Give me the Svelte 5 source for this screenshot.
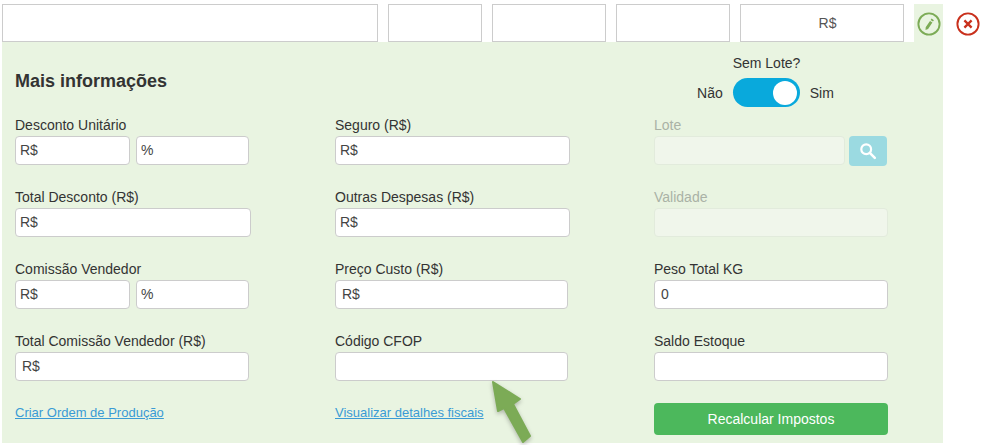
<script>
  const topCells = [
    { width: 376, text: '' },
    { width: 94, text: '' },
    { width: 114, text: '' },
    { width: 114, text: '' },
    { width: 164, text: 'R$' }
  ];
</script>

<div class="page">
  <div class="line">
    <div class="top-row">
      {#each topCells as cell}
        <div class="top-cell" style="width: {cell.width}px">{cell.text}</div>
      {/each}
      <div class="edit-cell">
        <button class="round-btn edit" aria-label="Editar">
          <svg width="24" height="24" viewBox="0 0 24 24">
            <circle cx="12" cy="12" r="10.6" fill="none" stroke="#7cab56" stroke-width="1.9" />
            <path d="M14.6 6.6l2.3 1.6-.9 1.4-2.4-1.6z M13 8.9l2.4 1.6-4.3 6.4-2.6 1 .2-2.7z" fill="#7cab56" />
          </svg>
        </button>
      </div>
    </div>
    <button class="round-btn remove" aria-label="Remover">
      <svg width="24" height="24" viewBox="0 0 24 24">
        <circle cx="12" cy="12" r="10.6" fill="none" stroke="#c9301c" stroke-width="1.9" />
        <path d="M8.4 8.4l7.2 7.2M15.6 8.4l-7.2 7.2" fill="none" stroke="#c9301c" stroke-width="2.3" />
      </svg>
    </button>
  </div>

  <section class="panel">
    <header class="head">
      <h3>Mais informações</h3>
      <div class="lote-toggle">
        <span class="toggle-title">Sem Lote?</span>
        <div class="toggle-row">
          <span class="no">Não</span>
          <span class="switch"><span class="knob"></span></span>
          <span class="yes">Sim</span>
        </div>
      </div>
    </header>

    <div class="fields">
      <div class="col">
        <div class="field">
          <label>Desconto Unitário</label>
          <div class="pair">
            <div class="input w115">R$</div>
            <div class="input w113">%</div>
          </div>
        </div>
        <div class="field">
          <label>Total Desconto (R$)</label>
          <div class="input w236">R$</div>
        </div>
        <div class="field">
          <label>Comissão Vendedor</label>
          <div class="pair">
            <div class="input w115">R$</div>
            <div class="input w113">%</div>
          </div>
        </div>
        <div class="field">
          <label>Total Comissão Vendedor (R$)</label>
          <div class="input w234 wide-pad">R$</div>
        </div>
        <a class="link" href="#ordem">Criar Ordem de Produção</a>
      </div>

      <div class="col">
        <div class="field">
          <label>Seguro (R$)</label>
          <div class="input w235">R$</div>
        </div>
        <div class="field">
          <label>Outras Despesas (R$)</label>
          <div class="input w235">R$</div>
        </div>
        <div class="field">
          <label>Preço Custo (R$)</label>
          <div class="input w233 mid-pad">R$</div>
        </div>
        <div class="field">
          <label>Código CFOP</label>
          <div class="input w233"></div>
        </div>
        <a class="link" href="#fiscais">Visualizar detalhes fiscais</a>
      </div>

      <div class="col">
        <div class="field">
          <label class="muted">Lote</label>
          <div class="pair tight">
            <div class="input disabled w191"></div>
            <button class="search" aria-label="Buscar">
              <svg width="18" height="18" viewBox="0 0 18 18">
                <circle cx="7.2" cy="7.2" r="4.9" fill="none" stroke="#fff" stroke-width="2.2" />
                <path d="M10.8 10.8l5 5" stroke="#fff" stroke-width="2.6" stroke-linecap="round" />
              </svg>
            </button>
          </div>
        </div>
        <div class="field">
          <label class="muted">Validade</label>
          <div class="input disabled w234"></div>
        </div>
        <div class="field">
          <label>Peso Total KG</label>
          <div class="input w234 mid-pad">0</div>
        </div>
        <div class="field">
          <label>Saldo Estoque</label>
          <div class="input w234"></div>
        </div>
        <button class="recalc">Recalcular Impostos</button>
      </div>
    </div>
  </section>

  <svg class="arrow" width="60" height="70" viewBox="0 0 60 70">
    <path d="M12 2L39 19 32 24 49 56 42 62 23 28 17 31z" fill="#7cab56" stroke="#7cab56" stroke-width="2" stroke-linejoin="round" />
  </svg>
</div>

<style>
  :global(body) {
    margin: 0;
    background: #fff;
  }

  .page {
    position: relative;
    width: 997px;
    height: 445px;
    overflow: hidden;
    font-family: "Liberation Sans", Arial, sans-serif;
    font-size: 14px;
    color: #333;
    padding-top: 4px;
    box-sizing: border-box;
  }

  .line {
    display: flex;
    margin-left: 2px;
  }

  .top-row {
    display: flex;
    gap: 10px;
    width: 941px;
  }

  .top-cell {
    height: 38px;
    box-sizing: border-box;
    border: 1px solid #ccc;
    background: #fff;
    text-align: center;
    line-height: 36px;
    font-size: 14px;
    color: #555;
    padding-left: 11px;
  }

  .edit-cell {
    width: 29px;
    background: #e9f4e1;
    display: flex;
    padding-top: 8px;
    padding-left: 3px;
    box-sizing: border-box;
  }

  .round-btn {
    border: 0;
    background: none;
    padding: 0;
    width: 24px;
    height: 24px;
  }

  .remove {
    margin: 8px 0 0 13px;
  }

  .panel {
    margin-left: 2px;
    width: 941px;
    height: 401px;
    background: #e9f4e1;
    box-sizing: border-box;
    padding: 0 13px;
  }

  .head {
    display: flex;
    height: 74px;
    position: relative;
  }

  h3 {
    margin: 29px 0 0;
    font-size: 18px;
    line-height: 20px;
    font-weight: bold;
  }

  .lote-toggle {
    position: absolute;
    left: 682px;
    top: 13px;
    display: flex;
    flex-direction: column;
    align-items: center;
    width: 137px;
  }

  .toggle-title {
    line-height: 16px;
    margin: 0 0 7px 2px;
  }

  .toggle-row {
    display: flex;
    align-items: center;
    gap: 10px;
  }

  .switch {
    width: 67px;
    height: 29px;
    border-radius: 15px;
    background: #09a9dc;
    position: relative;
  }

  .knob {
    position: absolute;
    right: 3px;
    top: 3px;
    width: 24px;
    height: 24px;
    border-radius: 50%;
    background: #fff;
  }

  .fields {
    display: grid;
    grid-template-columns: 320px 319px 240px;
  }

  .field {
    height: 72px;
  }

  label {
    display: block;
    line-height: 16px;
    height: 20px;
    padding-top: 1px;
    box-sizing: border-box;
  }

  .muted {
    color: #aab2a6;
  }

  .pair {
    display: flex;
    gap: 6px;
  }

  .pair.tight {
    gap: 4px;
  }

  .input {
    height: 29px;
    box-sizing: border-box;
    border: 1px solid #ccc;
    border-radius: 4px;
    background: #fff;
    line-height: 27px;
    padding-left: 4px;
    color: #444;
  }

  .wide-pad {
    padding-left: 6px;
  }

  .mid-pad {
    padding-left: 6px;
  }

  .disabled {
    background: #f0f6eb;
    border-color: #e2ebdc;
  }

  .w115 { width: 115px; }
  .w113 { width: 113px; }
  .w236 { width: 236px; }
  .w235 { width: 235px; }
  .w234 { width: 234px; }
  .w233 { width: 233px; }
  .w191 { width: 191px; }

  .search {
    width: 38px;
    height: 30px;
    border: 0;
    border-radius: 4px;
    background: #9bdae1;
    padding: 0;
    display: flex;
    align-items: center;
    justify-content: center;
  }

  .link {
    display: block;
    margin-top: 1px;
    color: #3a9bd5;
    text-decoration: underline;
    font-size: 13px;
    line-height: 16px;
  }

  .recalc {
    display: block;
    margin-top: -1px;
    width: 234px;
    height: 32px;
    border: 0;
    border-radius: 4px;
    background: #4cb85c;
    color: #fff;
    font: inherit;
    padding: 0;
  }

  .arrow {
    position: absolute;
    left: 481px;
    top: 380px;
    filter: drop-shadow(0 2px 2px rgba(0, 0, 0, 0.25));
  }
</style>
